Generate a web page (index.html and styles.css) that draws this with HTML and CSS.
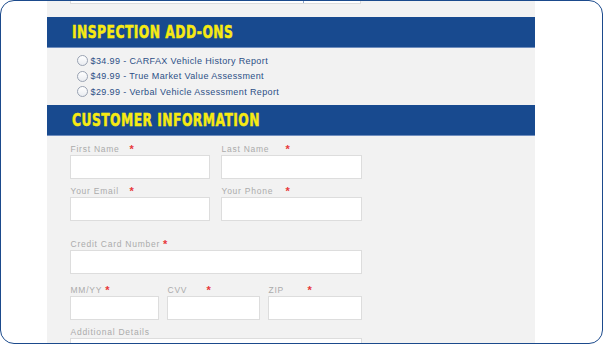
FILE: index.html
```html
<!DOCTYPE html>
<html lang="en">
<head>
    <meta charset="UTF-8">
    <meta name="viewport" content="width=device-width, initial-scale=1.0">
    <title>Vehicle Inspection - Order Form</title>
    <link rel="stylesheet" href="styles.css">
</head>
<body>
    <div class="frame">
        <div class="panel">
            <!-- tail of the field above -->
            <div class="field-top">
                <span class="field-top-split"></span>
            </div>

            <!-- Add-ons -->
            <div class="section-head">
                <h2>Inspection Add-Ons</h2>
            </div>
            <div class="addons">
                <label class="addon"><span class="radio"></span>$34.99 - CARFAX Vehicle History Report</label>
                <label class="addon"><span class="radio"></span>$49.99 - True Market Value Assessment</label>
                <label class="addon"><span class="radio"></span>$29.99 - Verbal Vehicle Assessment Report</label>
            </div>

            <!-- Customer -->
            <div class="section-head">
                <h2>Customer Information</h2>
            </div>
            <div class="form">
                <div class="row row-2">
                    <div class="field">
                        <div class="label"><span class="name w60">First Name</span><span class="req">*</span></div>
                        <div class="input"></div>
                    </div>
                    <div class="field">
                        <div class="label"><span class="name w62">Last Name</span><span class="req">*</span></div>
                        <div class="input"></div>
                    </div>
                </div>

                <div class="row row-2 gap-sm">
                    <div class="field">
                        <div class="label"><span class="name w60">Your Email</span><span class="req">*</span></div>
                        <div class="input"></div>
                    </div>
                    <div class="field">
                        <div class="label"><span class="name w62">Your Phone</span><span class="req">*</span></div>
                        <div class="input"></div>
                    </div>
                </div>

                <div class="row gap-lg">
                    <div class="field">
                        <div class="label"><span class="name">Credit Card Number</span><span class="req">*</span></div>
                        <div class="input"></div>
                    </div>
                </div>

                <div class="row row-3 gap-md">
                    <div class="field">
                        <div class="label"><span class="name">MM/YY</span><span class="req">*</span></div>
                        <div class="input"></div>
                    </div>
                    <div class="field">
                        <div class="label"><span class="name w36">CVV</span><span class="req">*</span></div>
                        <div class="input"></div>
                    </div>
                    <div class="field">
                        <div class="label"><span class="name w36">ZIP</span><span class="req">*</span></div>
                        <div class="input"></div>
                    </div>
                </div>

                <div class="row gap-sm">
                    <div class="field">
                        <div class="label"><span class="name">Additional Details</span></div>
                        <div class="input input-tall"></div>
                    </div>
                </div>
            </div>
        </div>
    </div>
</body>
</html>
```

FILE: styles.css
```css
* {
    margin: 0;
    padding: 0;
    box-sizing: border-box;
}

body {
    font-family: "Liberation Sans", Arial, sans-serif;
    background: #fff;
}

.frame {
    width: 603px;
    height: 344px;
    border: 1.5px solid #1b4a8c;
    border-radius: 14px;
    background: #fff;
    overflow: hidden;
}

.panel {
    margin-left: 45.5px;
    width: 488px;
    height: 100%;
    background: #f2f2f2;
}

.field-top {
    display: flex;
    margin-left: 23px;
    width: 291px;
    height: 3px;
    background: #fff;
    border: 1px solid #dcdcdc;
    border-top: none;
    margin-bottom: 13px;
}

.field-top-split {
    margin-left: 232px;
    width: 1px;
    background: #8fa6cc;
}

.section-head {
    height: 31px;
    background: #184a8f;
    border-bottom: 1px solid #6f8dbd;
    padding-left: 25px;
    display: flex;
    align-items: center;
}

/* condensed display face: no narrow font installed, so squeeze DejaVu */
.section-head h2 {
    font-family: "DejaVu Sans Condensed", "DejaVu Sans", sans-serif;
    font-weight: bold;
    font-size: 18px;
    color: #f7ea12;
    text-transform: uppercase;
    letter-spacing: 0.6px;
    line-height: 1;
    transform: scaleX(0.76);
    transform-origin: left center;
    white-space: nowrap;
    -webkit-text-stroke: 0.5px #f7ea12;
}

.addons {
    padding: 5px 0 5px 30px;
}

.addon {
    display: flex;
    align-items: center;
    height: 15.5px;
    font-size: 9px;
    letter-spacing: 0.38px;
    color: #2c4f86;
}

.radio {
    width: 11px;
    height: 11px;
    border-radius: 50%;
    border: 1px solid #9aa3b3;
    background: linear-gradient(#fff, #e9ecf1);
    margin-right: 3px;
}

.form {
    padding: 7px 0 0 23px;
    width: 315px;
}

.row {
    display: grid;
    grid-template-columns: 1fr;
}

.row-2 {
    grid-template-columns: 140px 141px;
    column-gap: 11px;
}

.row-3 {
    grid-template-columns: 89px 93px 94px;
    column-gap: 8px;
}

.gap-sm { margin-top: 6px; }
.gap-md { margin-top: 10px; }
.gap-lg { margin-top: 17px; }

.label {
    height: 12px;
    line-height: 12px;
    font-size: 8.5px;
    letter-spacing: 0.75px;
    color: #ababab;
    padding-left: 1px;
    display: flex;
}

.name.w36 { width: 36px; }
.name.w60 { width: 56px; }
.name.w62 { width: 61px; }

.req {
    color: #e8383a;
    font-size: 11px;
    font-weight: bold;
    margin-left: 3px;
    line-height: 13px;
}

.input {
    height: 24px;
    background: #fff;
    border: 1px solid #dddddd;
}

.input-tall {
    height: 40px;
}
```
